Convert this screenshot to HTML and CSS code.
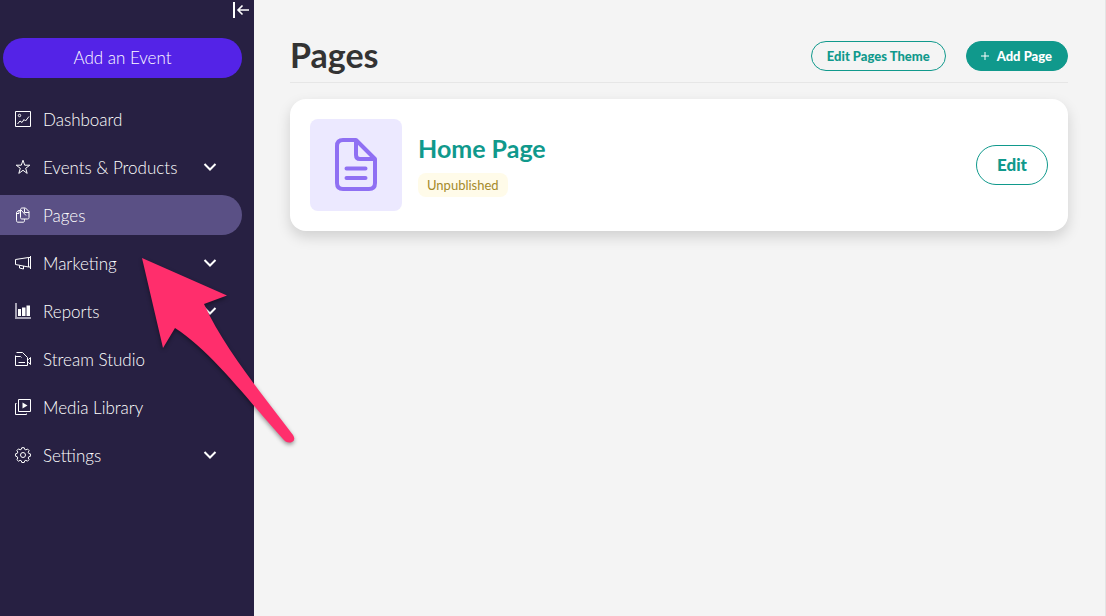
FILE: index.html
```html
<!DOCTYPE html>
<html lang="en">

<head>
    <meta charset="UTF-8">
    <meta name="viewport" content="width=device-width, initial-scale=1.0">
    <title>Pages</title>
    <link rel="stylesheet" href="styles.css">
</head>

<body>
    <aside class="sidebar">
        <button type="button" class="collapse" aria-label="Collapse menu">
            <svg width="16" height="16" viewBox="0 0 16 16">
                <path d="M0 0h2v16H0z" fill="currentColor" />
                <path d="M16 8H5M9.500 3.500L5 8l4.500 4.500" fill="none" stroke="currentColor" stroke-width="1.600" />
            </svg>
        </button>
        <button type="button" class="add-event">Add an Event</button>

        <nav class="menu">
            <a href="#">
                <svg class="icon" viewBox="0 0 16 16">
                    <path d="M.5.5h15v15H.5zM2.500 13l2.500-3 2 1.500 2-3 1.500 1.500L14 5.500" />
                    <circle cx="4.500" cy="4.500" r="1.200" />
                </svg>
                Dashboard
            </a>
            <a href="#">
                <svg class="icon" viewBox="0 0 16 16">
                    <path d="M8 1.200l1.700 5h5.100l-4.100 3.100 1.500 5.100L8 11.300l-4.200 3.100 1.500-5.100-4.100-3.100h5.100z" />
                </svg>
                Events &amp; Products
                <svg class="chevron" viewBox="0 0 16 16"><path d="M2.500 5L8 10.500 13.500 5" /></svg>
            </a>
            <a href="#" class="active">
                <svg class="icon" viewBox="0 0 16 16">
                    <path d="M5.500 3.500H3.200L1.500 5.500v8.200c0 1 .5 1.500 1.500 1.500h5c1 0 1.500-.5 1.500-1.500v-1.500" />
                    <path d="M1.700 6.500H4V3.700M5.500 3v7.500c0 1 .5 1.500 1.500 1.500h5.500c1 0 1.500-.5 1.500-1.500V4.500L10.500 1H7.200C6 1 5.500 1.800 5.500 3zM6 3l5 5.500M9.500 1.500v4H14" />
                </svg>
                Pages
            </a>
            <a href="#">
                <svg class="icon" viewBox="0 0 16 16">
                    <path d="M15.500 1v13M13.500 2.500L.5 4.500v5l13 2.500zM15.500 2.500h-2v9.500h2M4.500 10.500v2.500l4 1v-3" />
                </svg>
                Marketing
                <svg class="chevron" viewBox="0 0 16 16"><path d="M2.500 5L8 10.500 13.500 5" /></svg>
            </a>
            <a href="#">
                <svg class="icon" viewBox="0 0 16 16">
                    <path class="axis" d="M1 0v15h15" />
                    <path class="bars" d="M3 6h3v7H3zM7 4.500h3.500V13H7zM11.500 2.500H15V13h-3.500z" />
                </svg>
                Reports
                <svg class="chevron" viewBox="0 0 16 16"><path d="M2.500 5L8 10.500 13.500 5" /></svg>
            </a>
            <a href="#">
                <svg class="icon" viewBox="0 0 16 16">
                    <path d="M.5 4.500v10h12v-8l-5-5h-6M.5 5.500h5l1 1M3.500 11.500H10M12.500 8.500h1l2-2v7l-2-2h-1" />
                </svg>
                Stream Studio
            </a>
            <a href="#">
                <svg class="icon" viewBox="0 0 16 16">
                    <path d="M3.500.5h12v12h-12zM1.500 4.500h-1v11h11v-1" />
                    <path class="bars" d="M7.500 3.500v6l5-3z" />
                </svg>
                Media Library
            </a>
            <a href="#">
                <svg class="icon" viewBox="0 0 16 16">
                    <path d="M6.800.7h2.400l.5 1.700 1.200.5 1.600-.9 1.600 1.600-.9 1.600.5 1.200 1.700.5v2.400l-1.700.5-.5 1.200.9 1.600-1.600 1.600-1.600-.9-1.200.5-.5 1.700H6.800l-.5-1.700-1.200-.5-1.600.9-1.600-1.600.9-1.600-.5-1.200L.6 9.200V6.800l1.700-.5.5-1.200-.9-1.600 1.600-1.600 1.600.9 1.200-.5z" />
                    <circle cx="8" cy="8" r="2.500" />
                </svg>
                Settings
                <svg class="chevron" viewBox="0 0 16 16"><path d="M2.500 5L8 10.500 13.500 5" /></svg>
            </a>
        </nav>
    </aside>

    <main class="content">
        <header class="page-header">
            <h1>Pages</h1>
            <button type="button" class="btn">Edit Pages Theme</button>
            <button type="button" class="btn btn-solid">
                <svg width="8" height="8" viewBox="0 0 8 8"><path d="M4 0v8M0 4h8" stroke="currentColor" /></svg>
                Add Page
            </button>
        </header>

        <section class="card">
            <div class="thumb">
                <svg width="42" height="54" viewBox="0 0 42 54">
                    <path d="M8 2h13l19 19v24q0 6-6 6H8q-6 0-6-6V8q0-6 6-6M21 2v15q0 4 4 4h15M11.500 30.500h19M11.500 40h19" />
                </svg>
            </div>
            <div class="info">
                <h2>Home Page</h2>
                <span class="badge">Unpublished</span>
            </div>
            <button type="button" class="btn btn-large">Edit</button>
        </section>
    </main>

    <!-- pointer to the Pages menu item -->
    <svg class="pointer" width="160" height="192" viewBox="0 0 160 192">
        <path d="M2 2L87 39.500 64 48C83 90 118 133 153 179Q156 184 152 186 147 188 143 183C107 143 72 96 35 72L23 92z" />
    </svg>
</body>

</html>
```

FILE: styles.css
```css
* {
    box-sizing: border-box;
}

body {
    margin: 0;
    min-height: 100vh;
    display: flex;
    font-family: Lato, "Open Sans", sans-serif;
    background-color: #f4f4f4;
    color: #333;
}

button {
    font-family: inherit;
    cursor: pointer;
}

/* Sidebar */
.sidebar {
    width: 254px;
    flex-shrink: 0;
    display: flex;
    flex-direction: column;
    padding: 2px 0 20px;
    background-color: #272042;
    color: #fff;
}

.collapse {
    align-self: flex-end;
    height: 16px;
    margin-right: 5px;
    padding: 0;
    border: none;
    background: none;
    color: #fff;
}

.collapse svg {
    display: block;
}

.add-event {
    height: 40px;
    margin: 20px 12px 21px 3px;
    padding: 0 0 2px;
    border: none;
    border-radius: 20px;
    background-color: #5423e7;
    color: #fff;
    font-size: 17px;
    font-weight: 300;
}

.menu {
    display: flex;
    flex-direction: column;
    gap: 8px;
    margin-right: 12px;
}

.menu a {
    display: flex;
    align-items: center;
    gap: 12px;
    height: 40px;
    padding: 0 24px 0 15px;
    border-radius: 0 20px 20px 0;
    color: #fff;
    font-size: 17px;
    font-weight: 300;
    text-decoration: none;
}

.menu a.active {
    background-color: #5a5085;
}

.icon,
.chevron {
    width: 16px;
    height: 16px;
    flex-shrink: 0;
    fill: none;
    stroke: #fff;
}

.chevron {
    margin-left: auto;
    stroke-width: 2;
}

.icon .bars {
    fill: #fff;
    stroke: none;
}

.icon .axis {
    stroke: #a7a3b5;
    stroke-width: 2;
}

/* Main area */
.content {
    flex: 1;
    padding: 31px 37px 40px 36px;
    border-right: 1px solid #e4e4e4;
}

.page-header {
    display: flex;
    align-items: center;
    gap: 20px;
    height: 52px;
    margin-bottom: 16px;
    padding-bottom: 2px;
    border-bottom: 1px solid #e6e6e6;
}

.page-header h1 {
    margin: 0 auto 0 0;
    padding-bottom: 2px;
    font-size: 34px;
    line-height: 40px;
    font-weight: 700;
}

.btn {
    display: flex;
    align-items: center;
    gap: 8px;
    height: 30px;
    padding: 0 15px;
    border: 1px solid #10998c;
    border-radius: 20px;
    background-color: transparent;
    color: #10998c;
    font-size: 13px;
    font-weight: 900;
}

.btn-solid {
    padding: 0 15px 0 14px;
    background-color: #10998c;
    color: #fff;
}

.btn-large {
    height: 40px;
    padding: 0 20px 2px;
    font-size: 17px;
}

.card {
    display: flex;
    align-items: center;
    gap: 16px;
    padding: 20px;
    border-radius: 16px;
    background-color: #fff;
    box-shadow: 0 6px 14px rgba(0, 0, 0, 0.15);
}

.thumb {
    display: flex;
    align-items: center;
    justify-content: center;
    width: 92px;
    height: 92px;
    border-radius: 8px;
    background-color: #ece9ff;
}

.thumb path {
    fill: none;
    stroke: #8f70f3;
    stroke-width: 4;
    stroke-linecap: round;
    stroke-linejoin: round;
}

.info {
    flex: 1;
    padding-bottom: 2px;
}

.info h2 {
    margin: 0 0 9px;
    color: #10998c;
    font-size: 25px;
    line-height: 32px;
    font-weight: 700;
}

.badge {
    display: inline-block;
    padding: 0 9px;
    border-radius: 8px;
    background-color: #fffbe9;
    color: #a58a2b;
    font-size: 13px;
    line-height: 24px;
}

.pointer {
    position: absolute;
    top: 256px;
    left: 140px;
    fill: #ff2e6c;
    filter: drop-shadow(0 2px 2px rgba(0, 0, 0, 0.4));
    pointer-events: none;
}
```
